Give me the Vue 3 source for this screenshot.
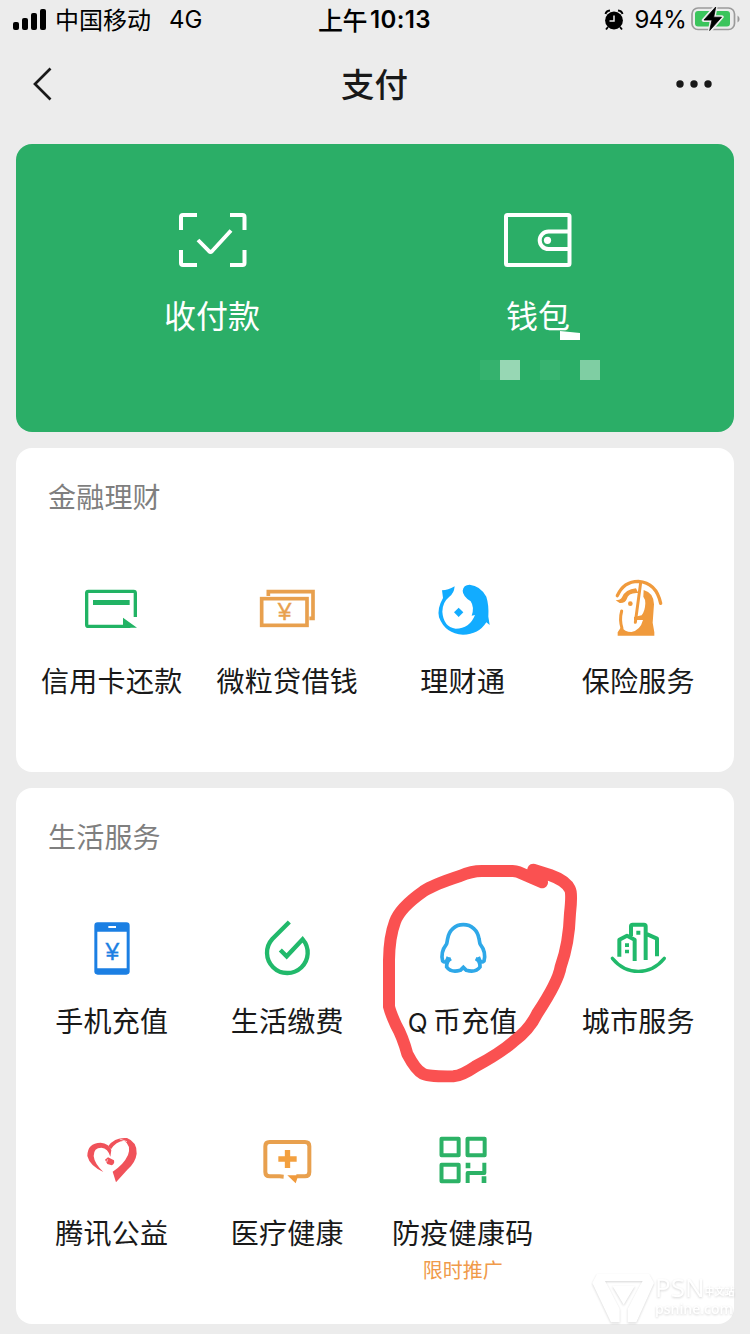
<script setup>
const finance = [
  { icon: 'card', label: '信用卡还款', box: '149 54 192 192' },
  { icon: 'loan', label: '微粒贷借钱', box: '676 54 192 192' },
  { icon: 'wealth', label: '理财通', box: '92 54 192 192' },
  { icon: 'insure', label: '保险服务', box: '619 54 192 192' },
]
const life = [
  { icon: 'phone', label: '手机充值', box: '149 54 192 192' },
  { icon: 'bill', label: '生活缴费', box: '676 54 192 192' },
  { icon: 'qcoin', label: '币充值', latin: 'Q', box: '182 204 192 192' },
  { icon: 'city', label: '城市服务', box: '709 204 192 192' },
  { icon: 'charity', label: '腾讯公益', box: '119 30 192 192' },
  { icon: 'medical', label: '医疗健康', box: '646 30 192 192' },
  { icon: 'health', label: '防疫健康码', box: '152 30 192 192', note: '限时推广' },
]
const sections = [
  { title: '金融理财', items: finance, cls: 'finance' },
  { title: '生活服务', items: life, cls: 'life' },
]
</script>

<template>
  <div class="page">
    <div class="status">
      <div class="status-left">
        <svg class="signal" width="34" height="22" viewBox="0 0 34 22">
          <rect x="0" y="14" width="6" height="8" rx="2" /><rect x="9" y="10" width="6" height="12" rx="2" />
          <rect x="18" y="5" width="6" height="17" rx="2" /><rect x="27" y="1" width="6" height="21" rx="2" />
        </svg>
        <span class="carrier">中国移动</span><span class="net">4G</span>
      </div>
      <div class="time"><span class="ampm">上午</span><span class="clock">10:13</span></div>
      <div class="status-right">
        <svg width="20" height="22" viewBox="0 0 20 22">
          <circle cx="10" cy="11.5" r="8.9" />
          <path d="M1.5 5Q2 2 6 1.5M18.5 5Q18 2 14 1.5M4 18L2 20.5M16 18L18 20.5" stroke="#000" stroke-width="1.9" fill="none" />
          <path d="M10 6.5V12H5.5" stroke="#ececec" stroke-width="1.5" fill="none" />
        </svg>
        <span class="percent">94%</span>
        <svg class="battery" width="50" height="26" viewBox="0 0 50 26">
          <rect x="1" y="2" width="42.5" height="21.5" rx="6" fill="none" stroke="#9b9b9b" stroke-width="1.7" />
          <rect x="4" y="5" width="35" height="15.5" rx="3" fill="#3bc45c" />
          <path d="M46.5 9.5Q48.6 10.5 48.6 13Q48.6 15.5 46.5 16.5Z" fill="#999" />
          <path d="M25 0L12.5 14.2H20.5L18.5 25.5L31 11H23Z" stroke="#ececec" stroke-width="3.4" stroke-linejoin="round" />
          <path d="M24.7 1L13 14H21L18.7 24.5L30.5 11.2H22.7Z" stroke="#000" stroke-width=".8" stroke-linejoin="round" />
        </svg>
      </div>
    </div>

    <header class="nav">
      <svg width="38" height="36" viewBox="0 0 38 36"><path d="M20.5 2.5L5 18L20.5 33.5" fill="none" stroke="#191919" stroke-width="2.7" /></svg>
      <h1>支付</h1>
      <svg width="38" height="10" viewBox="0 0 38 10" fill="#191919"><circle cx="5" cy="5" r="3.7" /><circle cx="19" cy="5" r="3.7" /><circle cx="33" cy="5" r="3.7" /></svg>
    </header>

    <section class="hero">
      <div class="hero-item">
        <svg width="70" height="56" viewBox="0 0 70 56" fill="none" stroke="#fff" stroke-width="4">
          <path d="M4 18V5Q4 3 6 3H20M53 3H65.500Q67.500 3 67.500 5V18M67.500 38V51Q67.500 53 65.500 53H53M20 53H6Q4 53 4 51V38" />
          <path d="M21 28L32 39.2Q33.500 40.5 35 39.2L54 18.500" stroke-width="3.9" />
        </svg>
        <span>收付款</span>
      </div>
      <div class="hero-item">
        <svg width="70" height="56" viewBox="0 0 70 56" fill="none" stroke="#fff" stroke-width="4">
          <rect x="3" y="3" width="63.5" height="50" rx="1.5" />
          <path d="M66 19.5H45.5A8.8 8.8 0 0 0 45.5 37.1H66" /><circle cx="44.5" cy="28.3" r="3.6" fill="#fff" stroke="none" />
        </svg>
        <span>钱包</span>
        <svg class="mosaic" width="120" height="50" viewBox="0 0 120 50">
          <path d="M80 1L100 3V10H80Z" fill="#fff" />
          <g fill="#fff"><path d="M0 30h20v20H0z" opacity=".05" /><path d="M20 30h20v20H20z" opacity=".51" /><path d="M60 30h20v20H60z" opacity=".06" /><path d="M100 30h20v20h-20z" opacity=".4" /></g>
        </svg>
      </div>
    </section>

    <section v-for="s in sections" :key="s.title" class="panel" :class="s.cls">
      <h2>{{ s.title }}</h2>
      <div class="grid">
        <div v-for="item in s.items" :key="item.icon" class="cell">
          <svg width="64" height="64" :viewBox="item.box" fill="none">
            <g v-if="item.icon === 'card'" stroke="#21b364" stroke-width="10">
              <path d="M315 171V99Q315 94 310 94H174Q169 94 169 99V194Q169 199 174 199H300" />
              <path d="M188 120H298V135H188ZM278 173L320 203H278Z" fill="#21b364" stroke="none" />
            </g>
            <g v-else-if="item.icon === 'loan'" stroke="#e8a04e" stroke-width="11">
              <rect x="696" y="116" width="136" height="80" /><path d="M716 108V95H850V175H839" />
              <text x="765" y="179" class="yen" fill="#e8a04e" stroke="#e8a04e">¥</text>
            </g>
            <g v-else-if="item.icon === 'wealth'" fill="#12acff">
              <path d="M125 91Q143 91 163 79Q161 101 147 110Q126 127 126 155Q129 200 166 206Q208 206 224 165L214 167Q223 142 211 124Q187 108 187 92Q189 74 208 74Q240 77 258 110Q266 135 264 170L268 195L258 187Q235 224 188 224Q135 222 116 172Q110 145 128 114Z" />
              <path d="M175 143L189 157L175 171L161 157Z" />
            </g>
            <g v-else-if="item.icon === 'insure'" fill="#f09a3c">
              <path d="M653 107Q672 64 716 64Q770 68 783 130" fill="none" stroke="#f09a3c" stroke-width="10" stroke-linecap="round" />
              <path d="M648 121Q663 121 667 112Q677 88 709 85L716 99Q686 97 681 118Q677 130 660 129Z" />
              <circle cx="692" cy="131" r="7" />
              <path d="M732 90Q762 98 763 133L759 188L764 217V227H654V217L665 200Q675 216 695 216Q722 211 730 180H703V171L726 166Q736 154 737 130Q737 117 731 110Z" />
              <path d="M666 153Q659 179 667 205M723 68L707 187" fill="none" stroke="#f09a3c" stroke-width="9" stroke-linecap="round" />
            </g>
            <g v-else-if="item.icon === 'phone'" fill="#1b7fe3">
              <rect x="192" y="67" width="106" height="157" rx="10" />
              <path d="M201 95H289V205H201ZM234 78H257V84H234Z" fill="#fff" />
              <text x="246" y="179" class="yen" stroke="#1b7fe3">¥</text>
            </g>
            <path v-else-if="item.icon === 'bill'" d="M779 66L728 117A61 61 0 1 0 819 118L771 169L752 150" stroke="#21b96b" stroke-width="13" />
            <g v-else-if="item.icon === 'qcoin'" stroke="#2ea8e8" stroke-width="11">
              <path d="M234 321L230 331Q224 340 217 333Q210 306 228 283C231 277 230 273 232 266C236 241 254 224 279 224C304 224 322 241 326 266C328 273 327 277 330 283Q348 306 341 333Q334 340 328 331L324 321" />
              <path d="M242 326Q228 333 229 351Q242 369 270 361L279 352L288 361Q316 369 329 351Q330 333 316 326" />
            </g>
            <g v-else-if="item.icon === 'city'" stroke="#21b96b" stroke-width="12" stroke-linejoin="round">
              <path d="M749 320V269L772 257L795 269V333M784 258V229Q784 224 789 224H823Q828 224 828 229V330M828 251L862 266V319" />
              <path d="M728 325Q760 364 806 364Q852 364 884 325" stroke-width="10" stroke-linecap="round" />
              <path d="M766 280h12v11h-12zM766 299h12v11h-12zM800 242h12v12h-12z" fill="#21b96b" stroke="none" />
            </g>
            <g v-else-if="item.icon === 'charity'" fill="#f0525a">
              <path d="M189 156Q148 137 141 108Q141 69 181 68Q206 71 213 90L210 110Q203 85 183 83Q160 83 160 108Q162 130 189 156Z" />
              <path d="M204 78Q223 51 260 54Q291 66 289 101Q286 127 261 149L227 187L217 155Q250 134 263 105Q273 76 252 62Q226 64 212 88Z" />
              <path d="M194 119L203 112L221 121Q224 132 214 136L201 132Z" /><path d="M202 118L199 126M238 57L260 65" stroke="#fff" stroke-width="2" />
            </g>
            <g v-else-if="item.icon === 'medical'" stroke="#e8a04e" stroke-width="12">
              <path d="M732 170L720 169H690Q677 169 677 156V79Q677 66 690 66H796Q809 66 809 79V156Q809 169 796 169H770" />
              <path d="M743 166H776L768 190Z" fill="#f09a3c" stroke="none" /><path d="M716 117H771M743.500 90V144" stroke="#f3a03f" stroke-width="16" />
            </g>
            <g v-else stroke="#2cb266" stroke-width="12" stroke-linejoin="round">
              <path d="M183.500 56.500H235V106H183.500ZM261.500 56.500H313V106H261.500ZM183.500 134H235V184H183.500Z" />
              <path d="M262 189V159H312V128" /><path d="M256 128h14v17h-14zM304 169h14v20h-14z" fill="#2cb266" stroke="none" />
            </g>
          </svg>
          <span class="label"><span v-if="item.latin" class="latin">{{ item.latin }}</span>{{ item.label }}</span>
          <span v-if="item.note" class="note">{{ item.note }}</span>
        </div>
      </div>
    </section>

    <svg class="scribble" width="340" height="240" viewBox="0 0 1020 720">
      <path d="M516 97L445 66Q438 63 428 63H335Q305 63 270 78Q190 104 160 124Q90 173 75 215Q58 260 57 330V470Q62 490 78 525Q98 560 112 612Q137 660 158 671Q172 680 250 679Q275 677 315 650Q390 610 430 575Q478 540 502 490Q565 395 572 350Q597 280 600 190Q607 128 600 118Q588 92 540 75L490 59" fill="none" stroke="#fa5151" stroke-width="36" stroke-linecap="round" stroke-linejoin="round" />
    </svg>

    <div class="watermark">
      <svg width="64" height="52" viewBox="0 0 192 156">
        <path d="M18 3H174L189 30L136 148H110V108L146 39L155 24H42L52 42L86 108V148H60L4 30ZM64 38H132L98 95Z" fill="#fff" fill-rule="evenodd" />
      </svg>
      <div class="wm-text">
        <div class="wm-top"><b>PSN</b><i>中文站</i></div>
        <div class="wm-site">psnine.com</div>
      </div>
    </div>
  </div>
</template>

<style>
body { background: #ececec; }
</style>

<style scoped>
.page { position: relative; width: 750px; height: 1334px; overflow: hidden; background: #ececec; color: #191919; font-family: "Noto Sans CJK SC", sans-serif; box-sizing: border-box; }
svg { display: block; flex: none; }
.status { display: grid; grid-template-columns: 1fr auto 1fr; height: 40px; align-items: center; padding: 0 11px 0 13px; color: #000; line-height: 38px; }
.status-left, .status-right, .time { display: flex; align-items: center; height: 40px; }
.status-right { justify-content: flex-end; margin-right: -2px; }
.signal { margin-top: -2px; }
.carrier { font-size: 24px; margin: -3px 0 0 8px; }
.net { font: 24px/42px Inter, sans-serif; margin-left: 18px; }
.time { font-weight: 500; }
.ampm { font-size: 25px; letter-spacing: -.5px; margin: -3px 0 0 -3px; }
.clock { font: 600 24px/42px Inter, sans-serif; margin-left: 3px; letter-spacing: .35px; }
.percent { font: 24px/42px Inter, sans-serif; margin: 0 5px 0 10px; letter-spacing: -.8px; }
.battery { margin-top: -2px; }
.nav { display: flex; justify-content: space-between; align-items: center; height: 88px; padding: 0 37px 0 30px; }
h1 { margin: -2px 0 0 6px; font-size: 33.500px; font-weight: 500; line-height: 50px; }
.hero { display: flex; height: 288px; margin: 16px 16px 0; padding: 68px 33px 0; box-sizing: border-box; border-radius: 16px; background: #2bae67; color: #fff; }
.hero-item { position: relative; width: 326px; display: flex; flex-direction: column; align-items: center; }
.hero-item span { margin-top: 22px; font-size: 32px; line-height: 48px; }
.mosaic { position: absolute; left: 105px; top: 118px; }
.panel { height: 324px; margin: 16px 16px 0; border-radius: 16px; background: #fff; }
.life { height: 536px; }
h2 { margin: 0; padding: 28px 0 0 32px; font-size: 28px; line-height: 40px; font-weight: 400; letter-spacing: .2px; color: #7f7f7f; }
.grid { display: grid; grid-template-columns: repeat(4, 1fr); grid-auto-rows: 212px; padding: 62px 8px 0; }
.cell { display: flex; flex-direction: column; align-items: center; }
.label { margin-top: 18px; font-size: 28px; line-height: 40px; letter-spacing: .3px; white-space: nowrap; }
.latin { font-family: Inter, sans-serif; font-size: 26px; margin-right: 5px; line-height: 1; }
.note { margin-top: 8px; font-size: 20px; line-height: 20px; color: #f09a4a; }
.yen { font-family: "Liberation Sans", sans-serif; font-size: 74px; text-anchor: middle; stroke-width: 1px; }
.scribble { position: absolute; left: 370px; top: 850px; }
.watermark { position: absolute; left: 591px; top: 1273px; display: flex; color: #fff; filter: drop-shadow(0 1px 1px rgba(0, 0, 0, .22)); opacity: .75; font-family: "Open Sans", "Noto Sans CJK SC", sans-serif; }
.wm-text { width: 86px; white-space: nowrap; }
.wm-top { display: flex; align-items: center; height: 27px; line-height: 27px; }
.wm-top b { font-size: 26px; line-height: 26px; font-weight: 400; }
.wm-top i { font-size: 10px; line-height: 12px; font-style: normal; font-weight: 700; margin-top: 9px; }
.wm-site { font-size: 14px; line-height: 14px; font-weight: 600; margin-top: 2px; }
</style>
